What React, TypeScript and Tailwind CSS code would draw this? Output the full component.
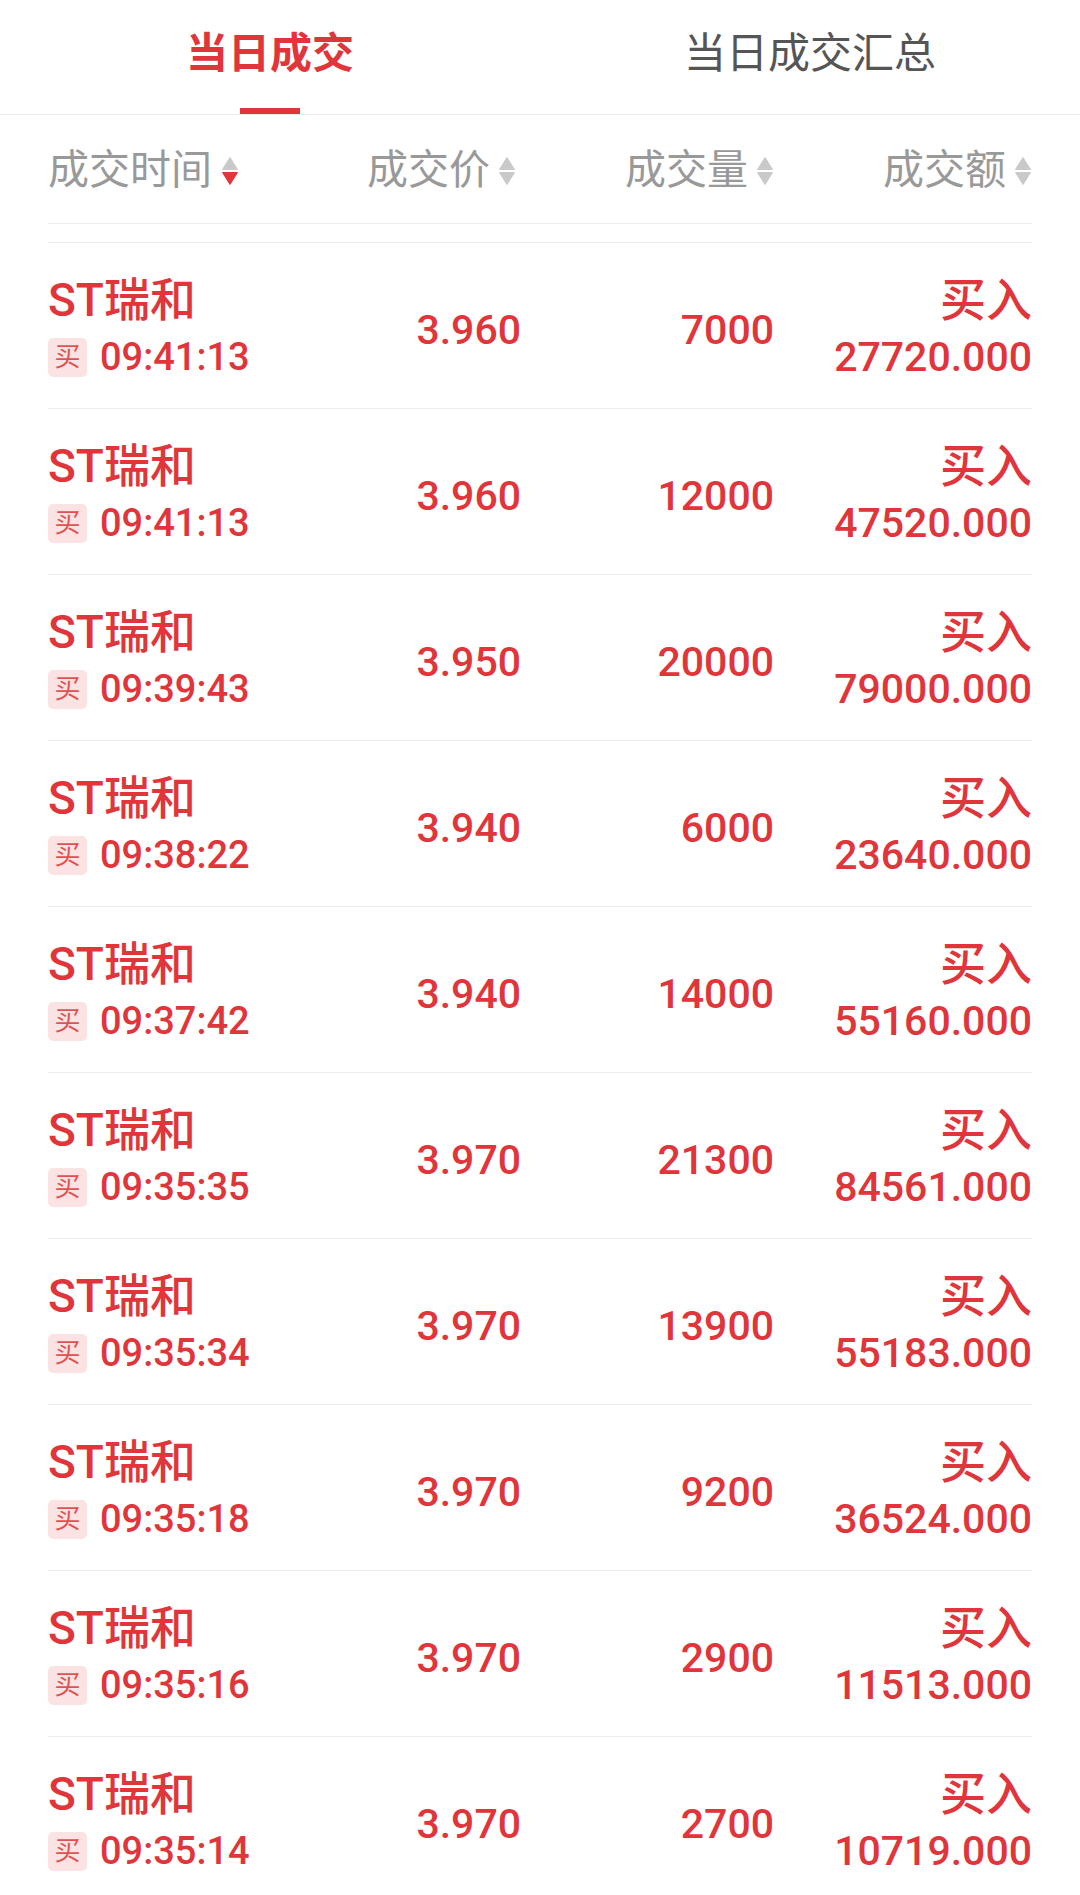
import React from "react";

interface TRADE {
  time: string;
  price: string;
  volume: string;
  amount: string;
}

const trades: TRADE[] = [
  { time: "09:41:13", price: "3.960", volume: "7000", amount: "27720.000" },
  { time: "09:41:13", price: "3.960", volume: "12000", amount: "47520.000" },
  { time: "09:39:43", price: "3.950", volume: "20000", amount: "79000.000" },
  { time: "09:38:22", price: "3.940", volume: "6000", amount: "23640.000" },
  { time: "09:37:42", price: "3.940", volume: "14000", amount: "55160.000" },
  { time: "09:35:35", price: "3.970", volume: "21300", amount: "84561.000" },
  { time: "09:35:34", price: "3.970", volume: "13900", amount: "55183.000" },
  { time: "09:35:18", price: "3.970", volume: "9200", amount: "36524.000" },
  { time: "09:35:16", price: "3.970", volume: "2900", amount: "11513.000" },
  { time: "09:35:14", price: "3.970", volume: "2700", amount: "10719.000" },
];

const cjk = "font-['Roboto','Noto_Sans_CJK_SC',sans-serif]";
const num = "font-['Roboto',sans-serif]";

function SortIcon({ active }: { active?: boolean }) {
  return (
    <svg width="18" height="30" viewBox="0 0 18 30" className="shrink-0">
      <path d="M9 1.5 L16.5 13.5 L1.5 13.5 Z" fill="#c9c9c9" strokeLinejoin="round" stroke="#c9c9c9" strokeWidth="1" />
      <path d="M1.5 16.5 L16.5 16.5 L9 28.5 Z" fill={active ? "#e0353a" : "#c9c9c9"} strokeLinejoin="round" stroke={active ? "#e0353a" : "#c9c9c9"} strokeWidth="1" />
    </svg>
  );
}

export default function App() {
  return (
    <div className={`w-[1080px] h-[1895px] overflow-hidden bg-white ${cjk}`}>
      {/* tabs */}
      <div className="flex h-[115px] border-b border-[#ececec]">
        <div className="flex w-1/2 flex-col items-center pt-[33px]">
          <div className="text-[42px] leading-[42px] font-bold text-[#e0353a]">当日成交</div>
          <div className="mt-auto h-[6px] w-[60px] bg-[#e0353a]" />
        </div>
        <div className="flex w-1/2 flex-col items-center pt-[33px]">
          <div className="text-[42px] leading-[42px] text-[#555555]">当日成交汇总</div>
        </div>
      </div>

      <div className="px-12">
        {/* table header */}
        <div className="grid h-[109px] grid-cols-[300px_173px_253px_1fr] items-center border-b border-[#ececec] pt-[4px] text-[41px] text-[#999999]">
          <div className="flex items-center gap-[9px]">
            成交时间
            <SortIcon active />
          </div>
          <div className="flex items-center justify-end gap-[8px] pr-[5px]">
            成交价
            <SortIcon />
          </div>
          <div className="flex items-center justify-end gap-[8px]">
            成交量
            <SortIcon />
          </div>
          <div className="flex items-center justify-end gap-[8px]">
            成交额
            <SortIcon />
          </div>
        </div>

        <div className="h-[18px]" />

        <div className="border-t border-[#ececec]">
          {trades.map((t, i) => (
            <div
              key={i}
              className="grid h-[166px] grid-cols-[300px_173px_253px_1fr] items-center border-b border-[#ececec] text-[#e0353a]"
            >
              <div className="flex flex-col gap-[11px]">
                <div className="text-[46px] leading-[52px] font-medium">ST瑞和</div>
                <div className="flex h-[40px] items-center gap-[13px]">
                  <div className="flex h-[39px] w-[39px] items-center justify-center rounded-[5px] bg-[#fce3e3] text-[26px] leading-none text-[#e05252]">
                    买
                  </div>
                  <div className={`${num} text-[38px] leading-[40px] font-medium`}>{t.time}</div>
                </div>
              </div>
              <div className={`${num} pt-[9px] text-right text-[41px] leading-[48px] font-medium`}>{t.price}</div>
              <div className={`${num} pt-[9px] text-right text-[41px] leading-[48px] font-medium`}>{t.volume}</div>
              <div className="flex flex-col items-end gap-[11px]">
                <div className="text-[46px] leading-[52px] font-medium">买入</div>
                <div className={`${num} h-[40px] text-[41px] leading-[40px] font-medium`}>{t.amount}</div>
              </div>
            </div>
          ))}
        </div>
      </div>
    </div>
  );
}
